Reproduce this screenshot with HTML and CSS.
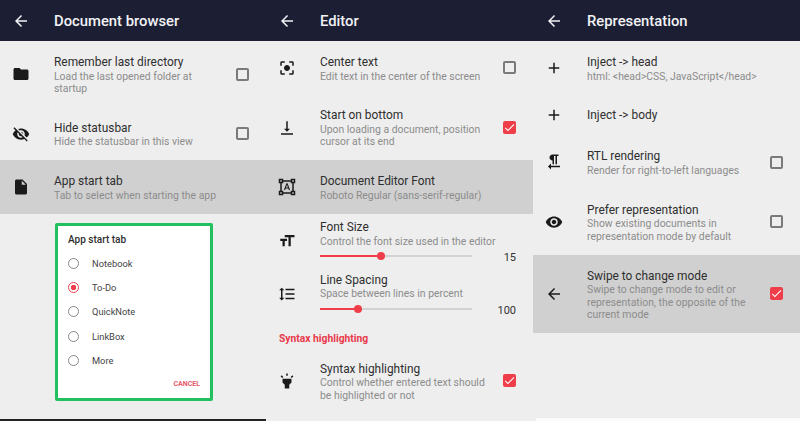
FILE: index.html
```html
<!DOCTYPE html>
<html lang="en">
<head>
  <meta charset="UTF-8" />
  <title>Settings screens</title>
  <link rel="stylesheet" href="styles.css">
</head>
<body>

<div class="screens">

  <section class="phone phone-first">
    <header class="topbar">
      <svg class="back" viewBox="0 0 24 24"><path d="M20 11H7.83l5.59-5.59L12 4l-8 8 8 8 1.41-1.41L7.83 13H20v-2z"/></svg>
      <h1>Document browser</h1>
    </header>

    <div class="row">
      <svg class="icon" viewBox="0 0 24 24"><path d="M10 4H4c-1.1 0-1.99.9-1.99 2L2 18c0 1.1.9 2 2 2h16c1.1 0 2-.9 2-2V8c0-1.1-.9-2-2-2h-8l-2-2z"/></svg>
      <div class="text">
        <div class="title">Remember last directory</div>
        <div class="sub">Load the last opened folder at<br>startup</div>
      </div>
      <span class="check"></span>
    </div>

    <div class="row">
      <svg class="icon" viewBox="0 0 24 24"><path d="M12 7c2.76 0 5 2.24 5 5 0 .65-.13 1.26-.36 1.83l2.92 2.92c1.51-1.26 2.7-2.89 3.43-4.75-1.73-4.39-6-7.5-11-7.5-1.4 0-2.74.25-3.98.7l2.16 2.16C10.74 7.13 11.35 7 12 7zM2 4.27l2.28 2.28.46.46C3.08 8.3 1.78 10.02 1 12c1.73 4.39 6 7.5 11 7.5 1.55 0 3.03-.3 4.38-.84l.42.42L19.73 22 21 20.73 3.27 3 2 4.27zM7.53 9.8l1.55 1.55c-.05.21-.08.43-.08.65 0 1.66 1.34 3 3 3 .22 0 .44-.03.65-.08l1.55 1.55c-.67.33-1.41.53-2.2.53-2.76 0-5-2.24-5-5 0-.79.2-1.53.53-2.2zm4.31-.78l3.15 3.15.02-.16c0-1.66-1.34-3-3-3l-.17.01z"/></svg>
      <div class="text">
        <div class="title">Hide statusbar</div>
        <div class="sub">Hide the statusbar in this view</div>
      </div>
      <span class="check"></span>
    </div>

    <div class="row active">
      <svg class="icon" viewBox="0 0 24 24"><path d="M6 2c-1.1 0-1.99.9-1.99 2L4 20c0 1.1.89 2 1.99 2H18c1.1 0 2-.9 2-2V8l-6-6H6zm7 7V3.5L18.5 9H13z"/></svg>
      <div class="text">
        <div class="title">App start tab</div>
        <div class="sub">Tab to select when starting the app</div>
      </div>
    </div>

    <div class="dialog">
      <div class="dialog-title">App start tab</div>
      <div class="option"><span class="radio"></span>Notebook</div>
      <div class="option"><span class="radio on"></span>To-Do</div>
      <div class="option"><span class="radio"></span>QuickNote</div>
      <div class="option"><span class="radio"></span>LinkBox</div>
      <div class="option"><span class="radio"></span>More</div>
      <div class="dialog-actions">CANCEL</div>
    </div>

    <div class="edge-dark"></div>
  </section>

  <section class="phone">
    <header class="topbar">
      <svg class="back" viewBox="0 0 24 24"><path d="M20 11H7.83l5.59-5.59L12 4l-8 8 8 8 1.41-1.41L7.83 13H20v-2z"/></svg>
      <h1>Editor</h1>
    </header>

    <div class="row">
      <svg class="icon" viewBox="0 0 24 24"><path d="M12 8c-2.21 0-4 1.79-4 4s1.79 4 4 4 4-1.79 4-4-1.79-4-4-4zm-7 7H3v4c0 1.1.9 2 2 2h4v-2H5v-4zM5 5h4V3H5c-1.1 0-2 .9-2 2v4h2V5zm14-2h-4v2h4v4h2V5c0-1.1-.9-2-2-2zm0 16h-4v2h4c1.1 0 2-.9 2-2v-4h-2v4z"/></svg>
      <div class="text">
        <div class="title">Center text</div>
        <div class="sub">Edit text in the center of the screen</div>
      </div>
      <span class="check"></span>
    </div>

    <div class="row">
      <svg class="icon" viewBox="0 0 24 24"><path d="M16 13h-3V3h-2v10H8l4 4 4-4zM4 19v2h16v-2H4z"/></svg>
      <div class="text">
        <div class="title">Start on bottom</div>
        <div class="sub">Upon loading a document, position<br>cursor at its end</div>
      </div>
      <span class="check on"><svg viewBox="0 0 24 24"><path d="M9 16.17L4.83 12l-1.42 1.41L9 19 21 7l-1.41-1.41z"/></svg></span>
    </div>

    <div class="row active">
      <svg class="icon" viewBox="0 0 24 24"><path d="M23 7V1h-6v2H7V1H1v6h2v10H1v6h6v-2h10v2h6v-6h-2V7h2zM3 3h2v2H3V3zm2 18H3v-2h2v2zm12-2H7v-2H5V7h2V5h10v2h2v10h-2v2zm4 2h-2v-2h2v2zM19 5V3h2v2h-2zm-5.27 9h-3.49l-.73 2H7.89l3.4-9h1.4l3.41 9h-1.63l-.74-2zm-3.04-1.26h2.61L12 8.91l-1.31 3.83z"/></svg>
      <div class="text">
        <div class="title">Document Editor Font</div>
        <div class="sub">Roboto Regular (sans-serif-regular)</div>
      </div>
    </div>

    <div class="row row-slider">
      <svg class="icon" viewBox="0 0 24 24"><path d="M9 4v3h5v12h3V7h5V4H9zm-6 8h3v7h3v-7h3V9H3v3z"/></svg>
      <div class="text">
        <div class="title">Font Size</div>
        <div class="sub">Control the font size used in the editor</div>
        <div class="slider">
          <div class="track"><div class="fill" style="width: 40%"></div></div>
          <span class="value">15</span>
        </div>
      </div>
    </div>

    <div class="row row-slider">
      <svg class="icon" viewBox="0 0 24 24"><path d="M6 7h2.5L5 3.5 1.5 7H4v10H1.5L5 20.5 8.5 17H6V7zm4-2v2h12V5H10zm0 14h12v-2H10v2zm0-6h12v-2H10v2z"/></svg>
      <div class="text">
        <div class="title">Line Spacing</div>
        <div class="sub">Space between lines in percent</div>
        <div class="slider">
          <div class="track"><div class="fill" style="width: 25%"></div></div>
          <span class="value">100</span>
        </div>
      </div>
    </div>

    <h2 class="section">Syntax highlighting</h2>

    <div class="row">
      <svg class="icon" viewBox="0 0 24 24"><path d="M6 14l3 3v5h6v-5l3-3V9H6zm5-12h2v3h-2zM3.5 5.875L4.914 4.46l2.12 2.122L5.62 7.997zm13.46.71l2.123-2.12 1.414 1.414L18.375 8z"/></svg>
      <div class="text">
        <div class="title">Syntax highlighting</div>
        <div class="sub">Control whether entered text should<br>be highlighted or not</div>
      </div>
      <span class="check on"><svg viewBox="0 0 24 24"><path d="M9 16.17L4.83 12l-1.42 1.41L9 19 21 7l-1.41-1.41z"/></svg></span>
    </div>
  </section>

  <section class="phone">
    <header class="topbar">
      <svg class="back" viewBox="0 0 24 24"><path d="M20 11H7.83l5.59-5.59L12 4l-8 8 8 8 1.41-1.41L7.83 13H20v-2z"/></svg>
      <h1>Representation</h1>
    </header>

    <div class="row">
      <svg class="icon" viewBox="0 0 24 24"><path d="M19 13h-6v6h-2v-6H5v-2h6V5h2v6h6v2z"/></svg>
      <div class="text">
        <div class="title">Inject -&gt; head</div>
        <div class="sub">html: &lt;head&gt;CSS, JavaScript&lt;/head&gt;</div>
      </div>
    </div>

    <div class="row row-plain">
      <svg class="icon" viewBox="0 0 24 24"><path d="M19 13h-6v6h-2v-6H5v-2h6V5h2v6h6v2z"/></svg>
      <div class="text">
        <div class="title">Inject -&gt; body</div>
      </div>
    </div>

    <div class="row">
      <svg class="icon" viewBox="0 0 24 24"><path d="M10 10v5h2V4h2v11h2V4h2V2h-8C7.79 2 6 3.79 6 6s1.79 4 4 4zm-2 7v-3l-4 4 4 4v-3h12v-2H8z"/></svg>
      <div class="text">
        <div class="title">RTL rendering</div>
        <div class="sub">Render for right-to-left languages</div>
      </div>
      <span class="check"></span>
    </div>

    <div class="row">
      <svg class="icon" viewBox="0 0 24 24"><path d="M12 4.5C7 4.5 2.73 7.61 1 12c1.73 4.39 6 7.5 11 7.5s9.27-3.11 11-7.5c-1.73-4.39-6-7.5-11-7.5zM12 17c-2.76 0-5-2.24-5-5s2.24-5 5-5 5 2.24 5 5-2.24 5-5 5zm0-8c-1.66 0-3 1.34-3 3s1.34 3 3 3 3-1.34 3-3-1.34-3-3-3z"/></svg>
      <div class="text">
        <div class="title">Prefer representation</div>
        <div class="sub">Show existing documents in<br>representation mode by default</div>
      </div>
      <span class="check"></span>
    </div>

    <div class="row active">
      <svg class="icon" viewBox="0 0 24 24"><path d="M20 11H7.83l5.59-5.59L12 4l-8 8 8 8 1.41-1.41L7.83 13H20v-2z"/></svg>
      <div class="text">
        <div class="title">Swipe to change mode</div>
        <div class="sub">Swipe to change mode to edit or<br>representation, the opposite of the<br>current mode</div>
      </div>
      <span class="check on"><svg viewBox="0 0 24 24"><path d="M9 16.17L4.83 12l-1.42 1.41L9 19 21 7l-1.41-1.41z"/></svg></span>
    </div>

    <div class="edge-light"></div>
  </section>

</div>

</body>
</html>
```

FILE: styles.css
```css
html, body {
  margin: 0;
  height: 100%;
  overflow: hidden;
}
body {
  font-family: Roboto, "Liberation Sans", sans-serif;
  background: #eee;
  color: #2e2e2e;
}
.screens {
  display: grid;
  grid-template-columns: 266px 267px 267px;
  height: 421px;
}
.phone {
  display: flex;
  flex-direction: column;
  height: 421px;
  background: #eee;
}
.topbar {
  display: flex;
  align-items: center;
  flex: none;
  height: 41px;
  padding-left: 12px;
  background: #1c1f33;
  color: #f2f2f6;
}
.topbar h1 {
  margin: 0;
  font-size: 14.8px;
  font-weight: 500;
}
.back {
  width: 18px;
  height: 18px;
  margin-right: 24px;
  fill: #f2f2f6;
}
.row {
  display: flex;
  align-items: center;
  flex: none;
  padding: 12px 17px 11.5px 12px;
}
.row.active {
  background: #d0d0d0;
}
.row-plain {
  padding-top: 11.5px;
  padding-bottom: 11.5px;
}
.row-slider {
  padding-top: 4.4px;
  padding-bottom: 2.3px;
}
.icon {
  flex: none;
  width: 18px;
  height: 18px;
  margin-right: 24px;
  fill: #1a1a1a;
}
.text {
  flex: 1;
  min-width: 0;
  padding-top: 1px;
}
.title {
  font-size: 11.9px;
  line-height: 16px;
}
.sub {
  margin-top: 0.5px;
  font-size: 10.4px;
  line-height: 12.4px;
  color: #8c8c8c;
}
.check {
  flex: none;
  box-sizing: border-box;
  width: 13px;
  height: 13px;
  border: 2px solid #7a7a7a;
  border-radius: 2px;
}
.check.on {
  display: flex;
  border: none;
  background: #ef3e4a;
}
.check.on svg {
  width: 13px;
  height: 13px;
  fill: #fff;
}
.slider {
  display: flex;
  justify-content: space-between;
  height: 16px;
}
.track {
  align-self: center;
  width: 152px;
  height: 2px;
  background: #d2d2d2;
}
.fill {
  position: relative;
  height: 2px;
  background: #ef3e4a;
}
.fill::after {
  content: "";
  position: absolute;
  right: -4px;
  top: -3px;
  width: 8px;
  height: 8px;
  border-radius: 50%;
  background: #ef3e4a;
}
.value {
  font-size: 11px;
  line-height: 20px;
  color: #333;
}
.section {
  margin: 0;
  padding: 12px 0 1px 13px;
  font-size: 10.3px;
  line-height: 16px;
  font-weight: 700;
  color: #e8394a;
}
.dialog {
  box-sizing: border-box;
  flex: none;
  display: flex;
  flex-direction: column;
  width: 158px;
  height: 178px;
  margin: 9.4px 0 0 55px;
  padding: 8px 10px 0 10px;
  background: #fff;
  border: 3px solid #22c05f;
  border-radius: 2px;
}
.dialog-title {
  font-size: 10px;
  line-height: 12px;
  font-weight: 500;
  margin-bottom: 5px;
}
.option {
  display: flex;
  align-items: center;
  height: 24.3px;
  font-size: 9.3px;
  color: #444;
}
.radio {
  box-sizing: border-box;
  flex: none;
  width: 11px;
  height: 11px;
  margin-right: 13px;
  border: 1.5px solid #888;
  border-radius: 50%;
}
.radio.on {
  border-color: #ef3e4a;
  background: radial-gradient(circle, #ef3e4a 0 2.5px, #fff 3px);
}
.dialog-actions {
  margin-top: auto;
  padding-bottom: 9px;
  text-align: right;
  font-size: 7px;
  line-height: 10px;
  font-weight: 700;
  color: #e8586a;
}
.edge-dark {
  height: 2px;
  margin-top: auto;
  margin-right: -1px;
  background: #222;
}
.edge-light {
  height: 3px;
  margin-top: auto;
  margin-left: 3px;
  background: #fbfbfb;
}
```
